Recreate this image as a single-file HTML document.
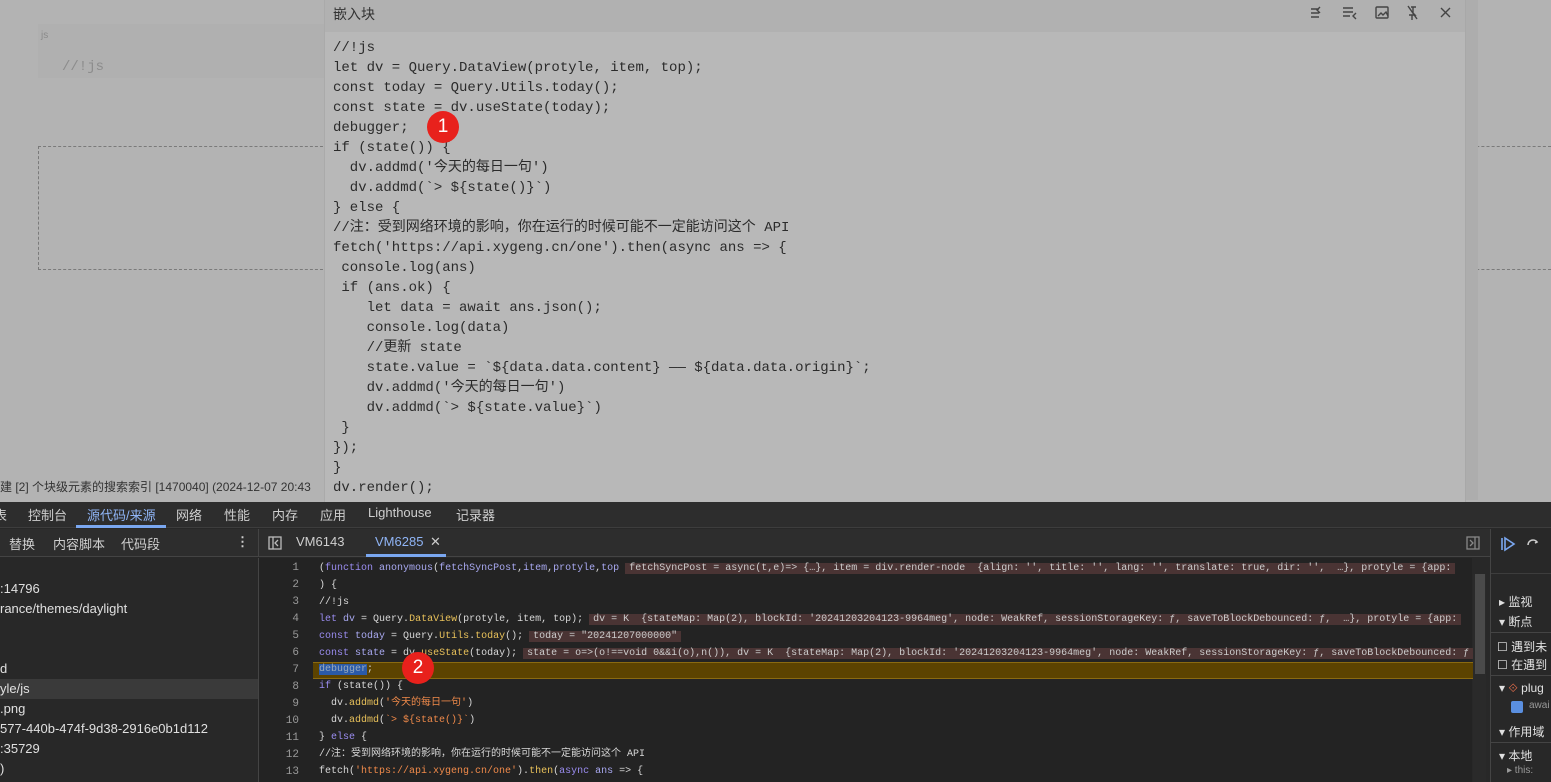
<!DOCTYPE html>
<html><head><meta charset="utf-8"><style>
*{margin:0;padding:0;box-sizing:border-box}
body{width:1551px;height:782px;overflow:hidden;background:#b3b3b3;font-family:"Liberation Sans","Noto Sans CJK SC",sans-serif;position:relative}
.abs{position:absolute}
.mono{font-family:"Liberation Mono","Noto Sans CJK SC",monospace}
#dlg{left:324px;top:0;width:1142px;height:502px;background:#b8b8b8;border-left:1px solid #aaa;border-right:1px solid #a8a8a8}
#dlg .hd{height:32px;background:#b1b1b1;font-size:14px;color:#333;padding:4px 0 0 8px}
#code{left:8px;top:38px;font-size:14px;line-height:20px;color:#2b2b2b;white-space:pre}
.badge{width:32px;height:32px;border-radius:50%;background:#e8211c;color:#fff;font-size:19px;text-align:center;line-height:32px;font-family:"Liberation Sans",sans-serif}
#dev{left:0;top:502px;width:1551px;height:280px;background:#282828;color:#ddd}
.tb1{left:0;top:0;width:1551px;height:26px;background:#2d2d2d;border-bottom:1px solid #3d3d3d;font-size:13px;color:#cfcfcf}
.tb1 span{position:absolute;top:3px}
.tb2{top:27px;height:28px;background:#2d2d2d;border-bottom:1px solid #444;font-size:13px;color:#cfcfcf}
.tb2 span{position:absolute;top:5px}
#lines{left:258px;top:56px;width:1214px;height:224px;background:#232323;border-left:1px solid #444}
.ln{position:absolute;left:0;width:40px;text-align:right;font-size:11px;color:#9a9a9a;font-family:"Liberation Mono",monospace}
#src{position:absolute;left:60px;top:3px;font-size:10px;line-height:16.9px;white-space:pre;color:#d8d8d8}
.k{color:#9a8cf0}.f{color:#e8c15a}.s{color:#f08a4a}.v{color:#a8a8f0}.c{color:#bbb}
.inl{background:#4a3434;color:#ccc;padding:0 4px;margin-left:6px}
.ft{font-size:13px;color:#e0e0e0;position:absolute;left:0;font-family:"Liberation Sans",sans-serif}
</style></head><body>
<div class="abs" style="left:38px;top:24px;width:290px;height:54px;background:#b0b0b0"></div>
<div class="abs" style="left:41px;top:30px;font-size:10px;color:#8a8a8a">js</div>
<div class="abs mono" style="left:62px;top:59px;font-size:14px;color:#8c8c8c">//!js</div>
<div class="abs" style="left:38px;top:146px;width:290px;height:124px;border:1px dashed #7a7a7a;border-right:none"></div>
<div class="abs" style="left:1466px;top:146px;width:85px;height:124px;border-top:1px dashed #7a7a7a;border-bottom:1px dashed #7a7a7a"></div>
<div class="abs" style="left:1466px;top:0;width:12px;height:500px;background:#adadad"></div>
<div class="abs" style="left:0;top:478px;font-size:12px;color:#333">建 [2] 个块级元素的搜索索引 [1470040] (2024-12-07 20:43</div>
<div id="dlg" class="abs">
<div class="hd">嵌入块</div>
<svg class="abs" style="left:980px;top:4px" width="160" height="18" fill="none" stroke="#444" stroke-width="1.4">
<path d="M6 5h8M6 9h8M6 13h8M15 3l-3 3 3 3"/>
<path d="M38 4h10M38 8h10M38 12h7M51 9l-3 3 3 3"/>
<rect x="71" y="3" width="12" height="11" rx="1"/><path d="M73 12l3-3 2 2 3-3 2 4"/>
<path d="M103 2l9 13M106 3h5M108 3v6l2 2h-6M107 11v5"/>
<path d="M136 4l9 9M145 4l-9 9"/>
</svg>
<div id="code" class="abs mono">//!js
let dv = Query.DataView(protyle, item, top);
const today = Query.Utils.today();
const state = dv.useState(today);
debugger;
if (state()) {
  dv.addmd('今天的每日一句')
  dv.addmd(`> ${state()}`)
} else {
//注：受到网络环境的影响，你在运行的时候可能不一定能访问这个 API
fetch('https://api.xygeng.cn/one').then(async ans => {
 console.log(ans)
 if (ans.ok) {
    let data = await ans.json();
    console.log(data)
    //更新 state
    state.value = `${data.data.content} —— ${data.data.origin}`;
    dv.addmd('今天的每日一句')
    dv.addmd(`> ${state.value}`)
 }
});
}
dv.render();</div>
<div class="abs badge" style="left:102px;top:111px">1</div>
</div>

<div id="dev" class="abs">
<div class="abs tb1">
<span style="left:-6px">表</span><span style="left:28px">控制台</span><span style="left:87px;color:#8fb4f5">源代码/来源</span><span style="left:176px">网络</span><span style="left:224px">性能</span><span style="left:272px">内存</span><span style="left:320px">应用</span><span style="left:368px">Lighthouse</span><span style="left:456px">记录器</span>
<div class="abs" style="left:76px;top:23px;width:90px;height:3px;background:#7aa7f0"></div>
</div>
<div class="abs tb2" style="left:0;width:258px">
<span style="left:9px">替换</span><span style="left:53px">内容脚本</span><span style="left:121px">代码段</span><span style="left:236px;font-weight:bold">⋮</span>
</div>
<div class="abs tb2" style="left:258px;width:1232px;border-left:1px solid #444">
<svg class="abs" style="left:9px;top:7px" width="14" height="14" fill="none" stroke="#bbb" stroke-width="1.3"><rect x="1" y="1" width="12" height="12"/><path d="M5 1v12M10 4l-3 3 3 3"/></svg>
<span style="left:37px">VM6143</span><span style="left:116px;color:#8fb4f5">VM6285</span><span style="left:171px;color:#ccc">✕</span>
<div class="abs" style="left:107px;top:25px;width:80px;height:3px;background:#7aa7f0"></div>
<svg class="abs" style="left:1207px;top:7px" width="14" height="14" fill="none" stroke="#888" stroke-width="1.3"><rect x="1" y="1" width="12" height="12"/><path d="M9 1v12M4 4l3 3-3 3"/></svg>
</div>
<div class="abs" style="left:0;top:56px;width:258px;height:224px;background:#282828;font-size:13px;color:#e0e0e0">
<div class="ft" style="top:23px">:14796</div>
<div class="ft" style="top:43px">rance/themes/daylight</div>
<div class="ft" style="top:103px">d</div>
<div class="abs" style="left:0;top:121px;width:258px;height:20px;background:#3a3a3a"></div>
<div class="ft" style="top:123px">yle/js</div>
<div class="ft" style="top:143px">.png</div>
<div class="ft" style="top:163px">577-440b-474f-9d38-2916e0b1d112</div>
<div class="ft" style="top:183px">:35729</div>
<div class="ft" style="top:203px">)</div>
</div>
<div id="lines" class="abs">
<div class="abs" style="left:54px;top:104px;width:1160px;height:17px;background:#5c4300;border-top:1px solid #8a6a10;border-bottom:1px solid #8a6a10"></div>
<div class="ln" style="top:4px">1</div><div class="ln" style="top:21px">2</div><div class="ln" style="top:38px">3</div><div class="ln" style="top:55px">4</div><div class="ln" style="top:72px">5</div><div class="ln" style="top:89px">6</div><div class="ln" style="top:106px">7</div><div class="ln" style="top:123px">8</div><div class="ln" style="top:140px">9</div><div class="ln" style="top:157px">10</div><div class="ln" style="top:174px">11</div><div class="ln" style="top:191px">12</div><div class="ln" style="top:208px">13</div>
<div id="src" class="mono">(<span class="k">function</span> <span class="v">anonymous</span>(<span class="v">fetchSyncPost</span>,<span class="v">item</span>,<span class="v">protyle</span>,<span class="v">top</span><span class="inl">fetchSyncPost = async(t,e)=> {…}, item = div.render-node  {align: '', title: '', lang: '', translate: true, dir: '',  …}, protyle = {app:</span>
) {
//!js
<span class="k">let</span> <span class="v">dv</span> = Query.<span class="f">DataView</span>(protyle, item, top);<span class="inl">dv = K  {stateMap: Map(2), blockId: '20241203204123-9964meg', node: WeakRef, sessionStorageKey: ƒ, saveToBlockDebounced: ƒ,  …}, protyle = {app:</span>
<span class="k">const</span> <span class="v">today</span> = Query.<span class="f">Utils</span>.<span class="f">today</span>();<span class="inl">today = "20241207000000"</span>
<span class="k">const</span> <span class="v">state</span> = dv.<span class="f">useState</span>(today);<span class="inl">state = o=>(o!==void 0&&i(o),n()), dv = K  {stateMap: Map(2), blockId: '20241203204123-9964meg', node: WeakRef, sessionStorageKey: ƒ, saveToBlockDebounced: ƒ</span>
<span style="background:#2a5aa8;color:#9ab">debugger</span>;
<span class="k">if</span> (state()) {
  dv.<span class="f">addmd</span>(<span class="s">'今天的每日一句'</span>)
  dv.<span class="f">addmd</span>(<span class="s">`> ${state()}`</span>)
} <span class="k">else</span> {
//注：受到网络环境的影响，你在运行的时候可能不一定能访问这个 API
fetch(<span class="s">'https://api.xygeng.cn/one'</span>).<span class="f">then</span>(<span class="k">async</span> <span class="v">ans</span> => {</div>
<div class="abs badge" style="left:143px;top:94px;width:32px;height:32px">2</div>
<div class="abs" style="left:1214px;top:16px;width:13px;height:208px;background:#2a2a2a"></div>
<div class="abs" style="left:1216px;top:16px;width:10px;height:100px;background:#4a4a4a"></div>
</div>
<div class="abs" style="left:1490px;top:27px;width:61px;height:253px;background:#282828;border-left:1px solid #444;font-size:12px;color:#e0e0e0">
<svg class="abs" style="left:9px;top:7px" width="40" height="16" fill="none" stroke-width="1.6"><path d="M2 2v12M5 2l9 6-9 6z" stroke="#7aa7f0"/><path d="M28 9a5 5 0 0 1 9-3l-2 1" stroke="#ccc"/></svg>
<div class="abs" style="left:0;top:44px;width:61px;border-top:1px solid #3d3d3d"></div>
<div class="abs" style="left:8px;top:64px">▸ 监视</div>
<div class="abs" style="left:8px;top:84px">▾ 断点</div>
<div class="abs" style="left:0;top:103px;width:61px;border-top:1px solid #444"></div>
<div class="abs" style="left:6px;top:109px">☐ 遇到未</div>
<div class="abs" style="left:6px;top:127px">☐ 在遇到</div>
<div class="abs" style="left:0;top:146px;width:61px;border-top:1px solid #444"></div>
<div class="abs" style="left:8px;top:152px">▾ <span style="color:#e06c4a">⟐</span> plug</div>
<div class="abs" style="left:20px;top:172px;width:12px;height:12px;background:#5a8fe0;border-radius:2px"></div>
<div class="abs" style="left:38px;top:171px;font-size:10px;color:#999">awai</div>
<div class="abs" style="left:8px;top:194px">▾ 作用域</div>
<div class="abs" style="left:0;top:213px;width:61px;border-top:1px solid #444"></div>
<div class="abs" style="left:8px;top:218px">▾ 本地</div>
<div class="abs" style="left:16px;top:236px;font-size:10px;color:#999">▸ this:</div>
</div>
</div>
</body></html>
